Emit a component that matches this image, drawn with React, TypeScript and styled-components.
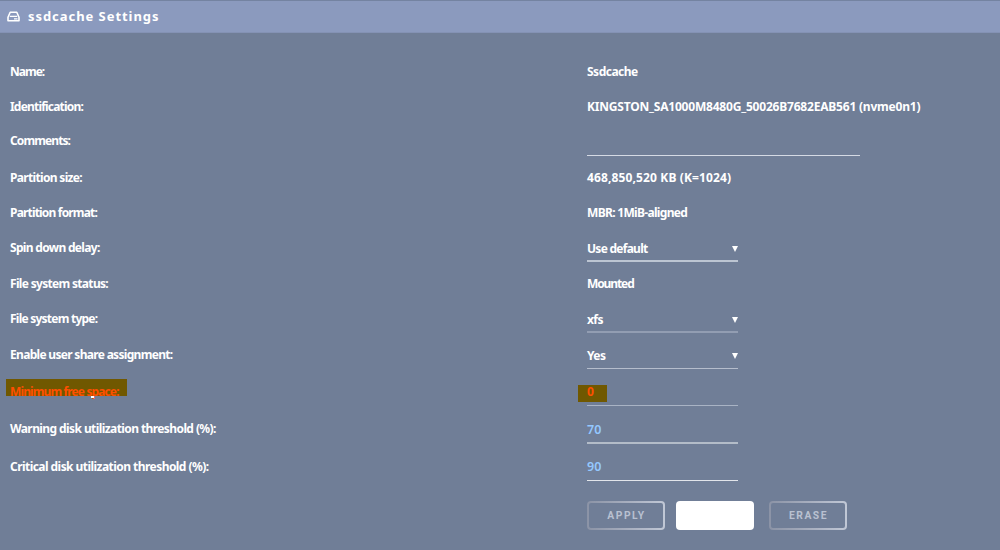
import React from "react"
import styled, { createGlobalStyle } from "styled-components"

const GlobalStyle = createGlobalStyle`
  * {
    box-sizing: border-box;
  }
  body {
    margin: 0;
    background: #707e97;
    color: #fff;
    font-family: "Noto Sans", "Open Sans", sans-serif;
    font-size: 12px;
    font-weight: 700;
  }
`

const Page = styled.main`
  width: 1000px;
  height: 550px;
  overflow: hidden;
  background: #707e97;
`

const TitleBar = styled.header`
  display: flex;
  align-items: center;
  gap: 8px;
  height: 33px;
  padding: 0 7px;
  background: #8b9abe;
  border-top: 1px solid #7483a1;
  border-bottom: 1px solid #8492b4;
`

const Title = styled.h1`
  margin: 0;
  padding-bottom: 2px;
  font-size: 13px;
  letter-spacing: 0.95px;
  line-height: 20px;
`

const Form = styled.div`
  padding: 29px 0 0 10px;
`

const Row = styled.div<{ $height: number }>`
  display: grid;
  grid-template-columns: 577px 1fr;
  height: ${({ $height }) => $height}px;
`

const Label = styled.span<{ $track: number; $marked?: boolean }>`
  position: relative;
  z-index: 0;
  justify-self: start;
  height: 20px;
  line-height: 20px;
  white-space: nowrap;
  letter-spacing: ${({ $track }) => $track}px;
  color: ${({ $marked }) => ($marked ? "#ff4f00" : "#fff")};
`

const Marker = styled.i<{ $left: number; $top: number; $width: number; $height: number }>`
  position: absolute;
  z-index: -1;
  left: ${({ $left }) => $left}px;
  top: ${({ $top }) => $top}px;
  width: ${({ $width }) => $width}px;
  height: ${({ $height }) => $height}px;
  background: #705800;
`

const Descender = styled.i`
  position: absolute;
  left: 81px;
  top: 14px;
  width: 3px;
  height: 2px;
  background: #fff;
`

const Field = styled.div<{ $width: number; $height: number; $line: string; $thick: number }>`
  display: flex;
  justify-content: space-between;
  align-items: flex-start;
  width: ${({ $width }) => $width}px;
  height: ${({ $height }) => $height}px;
  border-bottom: ${({ $thick }) => $thick}px solid ${({ $line }) => $line};
`

const Value = styled.span<{ $track: number; $tone?: string; $drop?: number; $light?: boolean }>`
  position: relative;
  z-index: 0;
  justify-self: start;
  height: 20px;
  line-height: 20px;
  padding-top: ${({ $drop = 0 }) => $drop}px;
  white-space: nowrap;
  letter-spacing: ${({ $track }) => $track}px;
  color: ${({ $tone = "#fff" }) => $tone};
  font-size: ${({ $light }) => ($light ? 12.5 : 12)}px;
  font-weight: ${({ $light }) => ($light ? 600 : 700)};
`

const Arrow = styled.svg`
  width: 6px;
  height: 6px;
  margin-top: 8px;
`

const Buttons = styled.div`
  display: flex;
  padding-left: 577px;
`

const Button = styled.button<{ $filled?: boolean; $gap?: number }>`
  width: 78px;
  height: 29px;
  margin: 0 ${({ $gap = 0 }) => $gap}px 0 0;
  padding: 0 0 0 1px;
  border: 2px solid transparent;
  border-radius: 4px;
  background: ${({ $filled }) =>
    $filled
      ? "#fff border-box"
      : "linear-gradient(#707e97, #707e97) padding-box, linear-gradient(90deg, #8b93a6, #c1c8d6) border-box"};
  color: #b9c1d1;
  font: 700 10.3px Roboto, sans-serif;
  letter-spacing: 1.5px;
`

const DriveIcon = () => (
  <svg width="13" height="11" viewBox="0 0 13 11" fill="none" stroke="#fff">
    <path d="M3.2 1.2h6.6l2.2 5v3.5H1V6.2z" strokeWidth="1.6" strokeLinejoin="round" />
    <path d="M2.8 5.4h7.4M7 7.8h3.5" strokeWidth="1.2" />
  </svg>
)

type RowData = {
  label: string
  value?: string
  height: number
  labelTrack: number
  valueTrack?: number
  drop?: number
  select?: boolean
  marked?: boolean
  tone?: string
  field?: { width: number; height: number; line: string; thick: number }
}

const rows: RowData[] = [
  { label: "Name:", labelTrack: -1, value: "Ssdcache", valueTrack: -0.5, height: 35 },
  { label: "Identification:", labelTrack: -0.8, value: "KINGSTON_SA1000M8480G_50026B7682EAB561 (nvme0n1)", valueTrack: -0.2, height: 34 },
  { label: "Comments:", labelTrack: -0.9, height: 37, field: { width: 273, height: 25, line: "#d5dae4", thick: 1 } },
  { label: "Partition size:", labelTrack: -0.67, value: "468,850,520 KB (K=1024)", valueTrack: 0.13, height: 35 },
  { label: "Partition format:", labelTrack: -0.82, value: "MBR: 1MiB-aligned", valueTrack: -0.68, height: 35 },
  { label: "Spin down delay:", labelTrack: -0.68, value: "Use default", valueTrack: -0.73, height: 36, select: true, drop: 1, field: { width: 151, height: 24, line: "#bcc5d2", thick: 2 } },
  { label: "File system status:", labelTrack: -0.68, value: "Mounted", valueTrack: -1.1, height: 35 },
  { label: "File system type:", labelTrack: -0.76, value: "xfs", valueTrack: -0.6, height: 36, select: true, drop: 1, field: { width: 151, height: 24, line: "#929db2", thick: 2 } },
  { label: "Enable user share assignment:", labelTrack: -0.69, value: "Yes", valueTrack: -0.6, height: 37, select: true, drop: 1, field: { width: 151, height: 24, line: "#b5bdcc", thick: 1 } },
  { label: "Minimum free space:", labelTrack: -0.88, value: "0", height: 37, marked: true, tone: "#ff4f00", field: { width: 151, height: 24, line: "#a9b3c4", thick: 1 } },
  { label: "Warning disk utilization threshold (%):", labelTrack: -0.59, value: "70", height: 38, tone: "#94c8ff", drop: 1, field: { width: 151, height: 25, line: "#b3bcc8", thick: 2 } },
  { label: "Critical disk utilization threshold (%):", labelTrack: -0.55, value: "90", height: 44, tone: "#94c8ff", field: { width: 151, height: 24, line: "#e2e5ea", thick: 1 } },
]

const App = () => (
  <Page>
    <GlobalStyle />
    <TitleBar>
      <DriveIcon />
      <Title>ssdcache Settings</Title>
    </TitleBar>
    <Form>
      {rows.map(({ label, value, height, labelTrack, valueTrack = 0, drop, select, marked, tone, field }) => {
        const text = value && (
          <Value $track={valueTrack} $drop={drop} $tone={tone} $light={!!tone && !marked}>
            {marked && <Marker $left={-9} $top={3} $width={29} $height={17} />}
            {value}
          </Value>
        )
        return (
          <Row key={label} $height={height}>
            <Label $track={labelTrack} $marked={marked}>
              {marked && <Marker $left={-4} $top={-3} $width={121} $height={17} />}
              {label}
              {marked && <Descender />}
            </Label>
            {field ? (
              <Field $width={field.width} $height={field.height} $line={field.line} $thick={field.thick}>
                {text}
                {select && (
                  <Arrow viewBox="0 0 6 6">
                    <path d="M0 0h6L3 6z" fill="#fff" />
                  </Arrow>
                )}
              </Field>
            ) : (
              text
            )}
          </Row>
        )
      })}
      <Buttons>
        <Button $gap={11}>APPLY</Button>
        <Button $filled $gap={15} aria-label="Done" />
        <Button>ERASE</Button>
      </Buttons>
    </Form>
  </Page>
)

export default App
